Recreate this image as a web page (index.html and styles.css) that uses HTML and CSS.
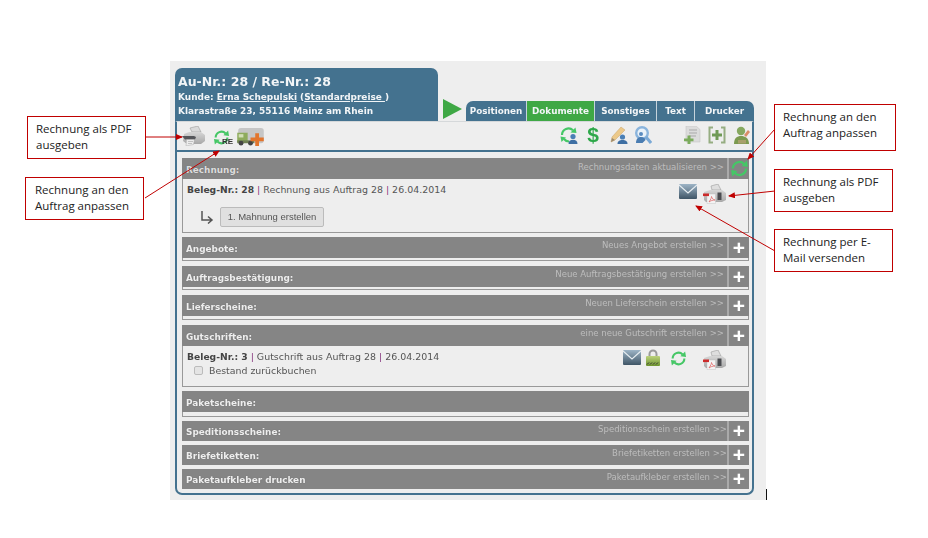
FILE: index.html
```html
<!DOCTYPE html>
<html lang="de">
<head>
<meta charset="utf-8">
<title>Dokumente</title>
<link rel="stylesheet" href="styles.css">
</head>
<body>
<svg class="defs" width="0" height="0" aria-hidden="true">
  <defs>
    <linearGradient id="mail" x1="0" y1="0" x2="0" y2="1"><stop offset="0" stop-color="#9db4c6"/><stop offset="1" stop-color="#3f5566"/></linearGradient>
    <linearGradient id="lock" x1="0" y1="0" x2="0" y2="1"><stop offset="0" stop-color="#bcd27c"/><stop offset="1" stop-color="#6f9530"/></linearGradient>
    <linearGradient id="pbody" x1="0" y1="0" x2="0" y2="1"><stop offset="0" stop-color="#d6d6d6"/><stop offset="1" stop-color="#a8a8a8"/></linearGradient>
    <symbol id="printer" viewBox="0 0 24 20">
      <path d="M9 2l8-2 3 6H11z" fill="#dadada" stroke="#9c9c9c" stroke-width=".6"/>
      <path d="M3 8l5-2h12l4 3v6l-4 3H6l-4-3z" fill="url(#pbody)"/>
      <path d="M1 10h12l2 1-1 2.500H4z" fill="#55565a"/>
      <path d="M5.500 13.500h8l-1 5-7.500 1.500z" fill="#ededed" stroke="#a0a0a0" stroke-width=".4"/>
      <path d="M7 15.500h5M7 17.500h4" stroke="#a5a5a5" stroke-width=".6"/>
    </symbol>
    <symbol id="pdfprinter" viewBox="0 0 24 20">
      <path d="M9 2l7-2 3 6H10z" fill="#dedede" stroke="#9c9c9c" stroke-width=".6"/>
      <path d="M2 8l6-2h12l4 3v7l-4 2H4l-2-2z" fill="url(#pbody)"/>
      <rect x="15.500" y="8.500" width="4" height="7.500" fill="#4b4c50"/>
      <path d="M5 10h8.500v9.500H5z" fill="#f3f3f3" stroke="#bdbdbd" stroke-width=".4"/>
      <rect x="1" y="9.500" width="6" height="2.600" fill="#cc2b2b"/>
      <path d="M7 18c2-3 2.500-4.500 2.500-5.500 .6 2 1.500 3 3.500 3.500-2.500 0-4.500.8-6 2z" fill="none" stroke="#e06a6a" stroke-width=".8"/>
    </symbol>
    <symbol id="sync" viewBox="0 0 18 18">
      <path d="M2.800 9a6.200 6.200 0 0 1 10.600-4.300" fill="none" stroke="#45c766" stroke-width="2.200"/>
      <path d="M11 6.600L17 7.500 16 1.500z" fill="#45c766"/>
      <path d="M15.200 9a6.200 6.200 0 0 1-10.600 4.300" fill="none" stroke="#45c766" stroke-width="2.200"/>
      <path d="M7 11.400L1 10.500 2 16.500z" fill="#45c766"/>
    </symbol>
    <symbol id="truck" viewBox="0 0 28 19">
      <rect x="1" y="0" width="27" height="16" rx="3" fill="#c6c6c6"/>
      <path d="M0 5h11v10H0z" fill="#8eab5c"/>
      <path d="M1.500 6.500h5V10h-5z" fill="#d2dfb6"/>
      <path d="M0 13h18v3H0z" fill="#6f8052"/>
      <circle cx="4" cy="16" r="2.500" fill="#444"/><circle cx="14" cy="16" r="2.500" fill="#444"/>
      <path d="M19 5.500h4V10h5v4h-5v5h-4v-5h-5v-4h5z" fill="#e2752d"/>
    </symbol>
    <symbol id="mailbox" viewBox="0 0 18 15">
      <rect width="18" height="15" rx="1" fill="url(#mail)"/>
      <path d="M0 1l9 8 9-8" fill="none" stroke="#e8eef2" stroke-width="1.200"/>
    </symbol>
    <symbol id="padlock" viewBox="0 0 14 17">
      <path d="M3.500 8V5a3.500 3.500 0 0 1 7 0v3" fill="none" stroke="#9a9a9a" stroke-width="2"/>
      <rect y="7" width="14" height="10" rx="1" fill="url(#lock)"/>
      <path d="M1 15.500l2-2M4 15.500l2-2M7 15.500l2-2M10 15.500l2-2" stroke="#333" stroke-width="1"/>
    </symbol>
    <symbol id="syncuser" viewBox="0 0 18 18">
      <path d="M2 9a6.500 6.500 0 0 1 11-4.700" fill="none" stroke="#45c766" stroke-width="2.200"/>
      <path d="M10.500 6.500L16.500 7 15.500 1.500z" fill="#45c766"/>
      <path d="M9 15.500a6.500 6.500 0 0 1-5-2.500" fill="none" stroke="#45c766" stroke-width="2.200"/>
      <path d="M6 11.500L.5 10.500 1.500 16z" fill="#45c766"/>
      <circle cx="13" cy="10.500" r="2.600" fill="#4a7fb5"/><path d="M8.500 18c0-3 1.800-4.300 4.500-4.300s4.500 1.300 4.500 4.300z" fill="#3e6fa3"/>
    </symbol>
    <symbol id="penuser" viewBox="0 0 18 18">
      <path d="M1 16l1-5L11 1l4 3-10 10z" fill="#ecc98a" stroke="#c9a266" stroke-width=".5"/>
      <path d="M1 16l1-4 3 2z" fill="#9a8a70"/>
      <circle cx="12.500" cy="11" r="2.600" fill="#4a7fb5"/><path d="M7.500 18c0-3 2-4 5-4s5 1 5 4z" fill="#3e6fa3"/>
    </symbol>
    <symbol id="searchuser" viewBox="0 0 18 18">
      <circle cx="8" cy="7" r="5.800" fill="#eaf2f9" stroke="#8ab4dc" stroke-width="2.400"/>
      <path d="M12 11l5 6" stroke="#7aa9d6" stroke-width="3"/>
      <circle cx="7" cy="8" r="2" fill="#5a8cc0"/><path d="M2 17c0-4 2-6 5-6s4.500 2 4.500 3l-3 3z" fill="#4a7db2"/>
    </symbol>
    <symbol id="docplus" viewBox="0 0 17 18">
      <path d="M2 0h10l4 3.500V16H2z" fill="#dcdcdc" stroke="#c8c8c8" stroke-width=".6"/>
      <path d="M5 4h8M5 7h8M5 10h7" stroke="#a9a9a9" stroke-width="1"/>
      <path d="M3.500 9.500h3v3h3v2.700h-3V18h-3v-2.800H0v-2.700h3.500z" fill="#7bab5c"/>
    </symbol>
    <symbol id="bracketplus" viewBox="0 0 18 18">
      <path d="M5 1.500H1.500v15H5M13 1.500h3.500v15H13" fill="none" stroke="#96ad82" stroke-width="2"/>
      <path d="M7.500 4h3v3.500H14v3h-3.500V14h-3v-3.500H4v-3h3.500z" fill="#6f9a56"/>
    </symbol>
    <symbol id="usertool" viewBox="0 0 18 18">
      <circle cx="8" cy="5" r="4.200" fill="#86a860"/>
      <path d="M1 18c0-6 3-8 7-8s8 2 8 8z" fill="#7c9a50"/>
      <path d="M11 9l4-5 2 2-4 5z" fill="#d98d68"/>
      <path d="M5 14h8v3.500H5z" fill="#a8a06c"/>
    </symbol>
    <marker id="head" markerWidth="7" markerHeight="6" refX="6" refY="3" orient="auto" markerUnits="userSpaceOnUse"><path d="M0 0l7 3-7 3z" fill="#c00000"/></marker>
  </defs>
</svg>

<main class="stage">
  <div class="panel">
    <header class="head">
      <div class="cust">
        <h1 class="cust-title">Au-Nr.: 28 / Re-Nr.: 28</h1>
        <p class="cust-line">Kunde: <u>Erna Schepulski</u> (<u>Standardpreise </u>)</p>
        <p class="cust-line">Klarastraße 23, 55116 Mainz am Rhein</p>
      </div>
      <div class="play"></div>
      <nav class="tabs">
        <a class="tab tab-pos">Positionen</a>
        <a class="tab tab-dok">Dokumente</a>
        <a class="tab tab-son">Sonstiges</a>
        <a class="tab tab-txt">Text</a>
        <a class="tab tab-dru">Drucker</a>
      </nav>
    </header>
    <div class="box">
      <div class="toolbar">
        <svg class="i i-print tl-print"><use href="#printer"/></svg>
        <span class="tl-re"><svg class="i i-sync"><use href="#sync"/></svg><b class="re">RE</b></span>
        <svg class="i i-truck"><use href="#truck"/></svg>
        <span class="tool-right">
          <svg class="i i-18"><use href="#syncuser"/></svg>
          <span class="dollar">$</span>
          <svg class="i i-18"><use href="#penuser"/></svg>
          <svg class="i i-18"><use href="#searchuser"/></svg>
        </span>
        <span class="tool-far">
          <svg class="i i-17"><use href="#docplus"/></svg>
          <svg class="i i-18"><use href="#bracketplus"/></svg>
          <svg class="i i-18"><use href="#usertool"/></svg>
        </span>
      </div>
      <div class="list">
        <section class="sec h-rech">
          <div class="bar"><span class="bar-title bar-dim">Rechnung:</span><span class="bar-link">Rechnungsdaten aktualisieren &gt;&gt;</span><span class="bar-btn"><svg class="i i-bar"><use href="#sync"/></svg></span></div>
          <div class="row row-rech">
            <p class="beleg"><b>Beleg-Nr.: 28</b> <i>|</i> Rechnung aus Auftrag 28 <i>|</i> 26.04.2014</p>
            <span class="row-icons">
              <svg class="i i-mail"><use href="#mailbox"/></svg>
              <svg class="i i-print"><use href="#pdfprinter"/></svg>
            </span>
          </div>
          <div class="mahn">
            <svg class="corner" viewBox="0 0 14 14"><path d="M2 1v9h9M8 6.500l4 3.500-4 3.500" fill="none" stroke="#555" stroke-width="1.500"/></svg>
            <button class="btn" type="button">1. Mahnung erstellen</button>
          </div>
        </section>
        <section class="sec h-24"><div class="bar"><span class="bar-title">Angebote:</span><span class="bar-link">Neues Angebot erstellen &gt;&gt;</span><span class="bar-btn plus">+</span></div></section>
        <section class="sec h-24 gap5"><div class="bar"><span class="bar-title">Auftragsbestätigung:</span><span class="bar-link">Neue Auftragsbestätigung erstellen &gt;&gt;</span><span class="bar-btn plus">+</span></div></section>
        <section class="sec h-25 gap5"><div class="bar"><span class="bar-title">Lieferscheine:</span><span class="bar-link">Neuen Lieferschein erstellen &gt;&gt;</span><span class="bar-btn plus">+</span></div></section>
        <section class="sec h-gut gap5">
          <div class="bar"><span class="bar-title">Gutschriften:</span><span class="bar-link">eine neue Gutschrift erstellen &gt;&gt;</span><span class="bar-btn plus">+</span></div>
          <div class="row row-gut">
            <div>
              <p class="beleg"><b>Beleg-Nr.: 3</b> <i>|</i> Gutschrift aus Auftrag 28 <i>|</i> 26.04.2014</p>
              <label class="check"><span class="cb"></span>Bestand zurückbuchen</label>
            </div>
            <span class="row-icons gut-icons">
              <svg class="i i-mail"><use href="#mailbox"/></svg>
              <svg class="i i-lock"><use href="#padlock"/></svg>
              <svg class="i i-sync2"><use href="#sync"/></svg>
              <svg class="i i-print gut-print"><use href="#pdfprinter"/></svg>
            </span>
          </div>
        </section>
        <section class="sec h-26"><div class="bar"><span class="bar-title">Paketscheine:</span></div></section>
        <section class="sec h-20"><div class="bar"><span class="bar-title">Speditionsscheine:</span><span class="bar-link">Speditionsschein erstellen &gt;&gt;</span><span class="bar-btn plus">+</span></div></section>
        <section class="sec h-20"><div class="bar"><span class="bar-title">Briefetiketten:</span><span class="bar-link">Briefetiketten erstellen &gt;&gt;</span><span class="bar-btn plus">+</span></div></section>
        <section class="sec h-20"><div class="bar"><span class="bar-title">Paketaufkleber drucken</span><span class="bar-link">Paketaufkleber erstellen &gt;&gt;</span><span class="bar-btn plus">+</span></div></section>
      </div>
    </div>
  </div>
  <span class="tick"></span>
</main>

<aside class="note n1">Rechnung als PDF ausgeben</aside>
<aside class="note n2">Rechnung an den Auftrag anpassen</aside>
<aside class="note n3">Rechnung an den Auftrag anpassen</aside>
<aside class="note n4">Rechnung als PDF ausgeben</aside>
<aside class="note n5">Rechnung per E-Mail versenden</aside>

<svg class="arrows" viewBox="0 0 928 538" aria-hidden="true">
  <g stroke="#c00000" stroke-width="1" fill="none">
    <line x1="146" y1="137" x2="182" y2="137" marker-end="url(#head)"/>
    <line x1="145" y1="198" x2="219" y2="151" marker-end="url(#head)"/>
    <line x1="775" y1="129" x2="748" y2="159" marker-end="url(#head)"/>
    <line x1="775" y1="191" x2="729" y2="196" marker-end="url(#head)"/>
    <line x1="775" y1="251" x2="696" y2="206" marker-end="url(#head)"/>
  </g>
</svg>
</body>
</html>
```
FILE: styles.css
```css
* { box-sizing: border-box; }
html, body { margin: 0; padding: 0; background: #fff; }
body { width: 928px; height: 538px; position: relative; overflow: hidden; padding: 61px 0 0 170px; font-family: "DejaVu Sans", Verdana, sans-serif; }
.defs { position: absolute; }
p, h1 { margin: 0; }

.stage { width: 596px; height: 439px; background: #eee; padding: 7px 0 0 5px; position: relative; }
.panel { width: 579px; filter: blur(.25px); }

.head { display: flex; align-items: flex-end; height: 53px; }
.cust { width: 263px; height: 53px; background: #44728f; color: #f2f5f7; border-radius: 7px 7px 0 0; padding: 6px 0 0 3px; }
.cust-title { font-size: 12.500px; line-height: 15px; font-weight: 700; margin-bottom: 1px; }
.cust-line { font-size: 8.950px; line-height: 14px; font-weight: 700; }
.play { width: 0; height: 0; margin: 0 4px 2px 5px; border-left: 19px solid #3fa845; border-top: 10.500px solid transparent; border-bottom: 10.500px solid transparent; }
.tabs { display: flex; width: 288px; height: 20px; margin-left: 0; background: #44728f; border-radius: 7px 7px 0 0; overflow: hidden; }
.tab { font-size: 8.800px; font-weight: 700; color: #f2f5f7; text-align: center; line-height: 20px; border-right: 1px solid #c5d3dc; }
.tab-pos { width: 61px; }
.tab-dok { width: 68px; background: #3fa845; }
.tab-son { width: 62px; }
.tab-txt { width: 38px; }
.tab-dru { width: 59px; border-right: 0; }

.box { border: 2px solid #44728f; border-top: 1px solid #d5d8da; border-radius: 0 0 7px 7px; height: 374px; background: #eee; }
.toolbar { display: flex; align-items: flex-start; height: 30px; padding: 4px 0 0 4px; border-bottom: 2px solid #44728f; }
.i { display: block; flex: none; }
.i-print { width: 24px; height: 20px; }
.tl-print { margin-right: 8px; }
.tl-re { position: relative; display: block; width: 24px; height: 20px; margin-top: 3px; }
.i-sync { width: 17px; height: 17px; }
.re { position: absolute; left: 9px; top: 8px; font: 700 8px/9px "Liberation Sans", sans-serif; color: #333; }
.i-truck { width: 27px; height: 18px; margin-top: 2px; }
.i-18 { width: 18px; height: 18px; }
.i-17 { width: 17px; height: 18px; }
.tool-right { display: flex; gap: 6px; margin-left: 296px; align-items: flex-start; }
.dollar { width: 14px; color: #2ea84a; font: 700 21px/18px "Liberation Sans", sans-serif; text-align: center; margin: 0 4px 0 2px; }
.tool-far { display: flex; gap: 7px; margin-left: 32px; }

.list { padding: 6px 3px 0 5px; display: flex; flex-direction: column; gap: 4px; }
.sec { border: 1px solid #999; border-top: 0; background: #eee; }
.gap5 { margin-top: 1px; }
.h-rech { height: 75px; }
.h-24 { height: 24px; }
.h-25 { height: 25px; }
.h-26 { height: 26px; }
.h-gut { height: 62px; }
.h-20 { height: 20px; }

.bar { display: flex; height: 21px; margin: 0 -1px; background: #858585; color: #eee; align-items: center; padding: 2px 0 0 4px; }
.h-20 .bar { height: 20px; }
.bar-title { font-size: 8.900px; font-weight: 700; text-shadow: 0 0 1px #666; }
.bar-dim { color: #ddd; }
.bar-link { margin-left: auto; font-size: 8.520px; color: #bdbdbd; position: relative; bottom: 4px; white-space: nowrap; padding-right: 3px; }
.h-rech .bar-link { bottom: 3px; }
.h-20 .bar-link { bottom: 3px; padding-right: 0; }
.bar-btn { flex: none; width: 22px; height: 21px; margin-top: -2px; border-left: 2px solid #aaa; display: flex; align-items: center; justify-content: center; }
.h-20 .bar-btn { height: 20px; }
.plus { font: 700 21px/20px "Liberation Sans", sans-serif; color: #fff; }
.i-bar { width: 19px; height: 19px; }

.row { display: flex; justify-content: space-between; padding: 0 0 0 4px; }
.beleg { font-size: 9.450px; line-height: 13px; color: #555; }
.beleg b { color: #444; font-size: 9.200px; }
.beleg i { font-style: normal; color: #86367e; }
.row-rech { height: 28px; padding-top: 4px; }
.row-icons { display: flex; align-items: flex-start; gap: 5px; margin-right: 22px; margin-top: 1px; }
.i-mail { width: 18px; height: 15px; }
.i-lock { width: 14px; height: 17px; margin-top: -1px; }
.i-sync2 { width: 17px; height: 17px; margin-left: 5px; }
.gut-print { margin-left: 10px; }
.gut-icons { margin-right: 22px; margin-top: 0; }
.row-gut { padding-top: 4px; }

.mahn { display: flex; align-items: center; padding-left: 17px; }
.corner { width: 14px; height: 14px; margin-right: 6px; }
.btn { width: 104px; height: 20px; padding: 0; background: #e0e0e0; border: 1px solid #bbb; border-radius: 2px; font: 400 9.500px/18px "Liberation Sans", sans-serif; color: #555; }

.check { display: flex; align-items: center; font-size: 9.400px; line-height: 13px; color: #555; padding-left: 7px; margin-top: 1px; }
.cb { width: 9px; height: 9px; border: 1px solid #bbb; background: #e4e4e4; border-radius: 2px; margin-right: 6px; }

.tick { position: absolute; left: 596px; top: 428px; width: 1px; height: 11px; background: #111; }

.note { position: absolute; border: 1px solid #c00000; background: #fff; color: #222; font: 400 11.500px/16px "Open Sans", sans-serif; padding: 4px 8px; }
.n1 { left: 27px; top: 116px; width: 119px; height: 43px; }
.n2 { left: 25px; top: 177px; width: 119px; height: 43px; padding-left: 9px; }
.n3 { left: 774px; top: 104px; width: 122px; height: 47px; }
.n4 { left: 774px; top: 169px; width: 119px; height: 43px; }
.n5 { left: 774px; top: 229px; width: 119px; height: 43px; }
.arrows { position: absolute; left: 0; top: 0; width: 928px; height: 538px; pointer-events: none; }
```
